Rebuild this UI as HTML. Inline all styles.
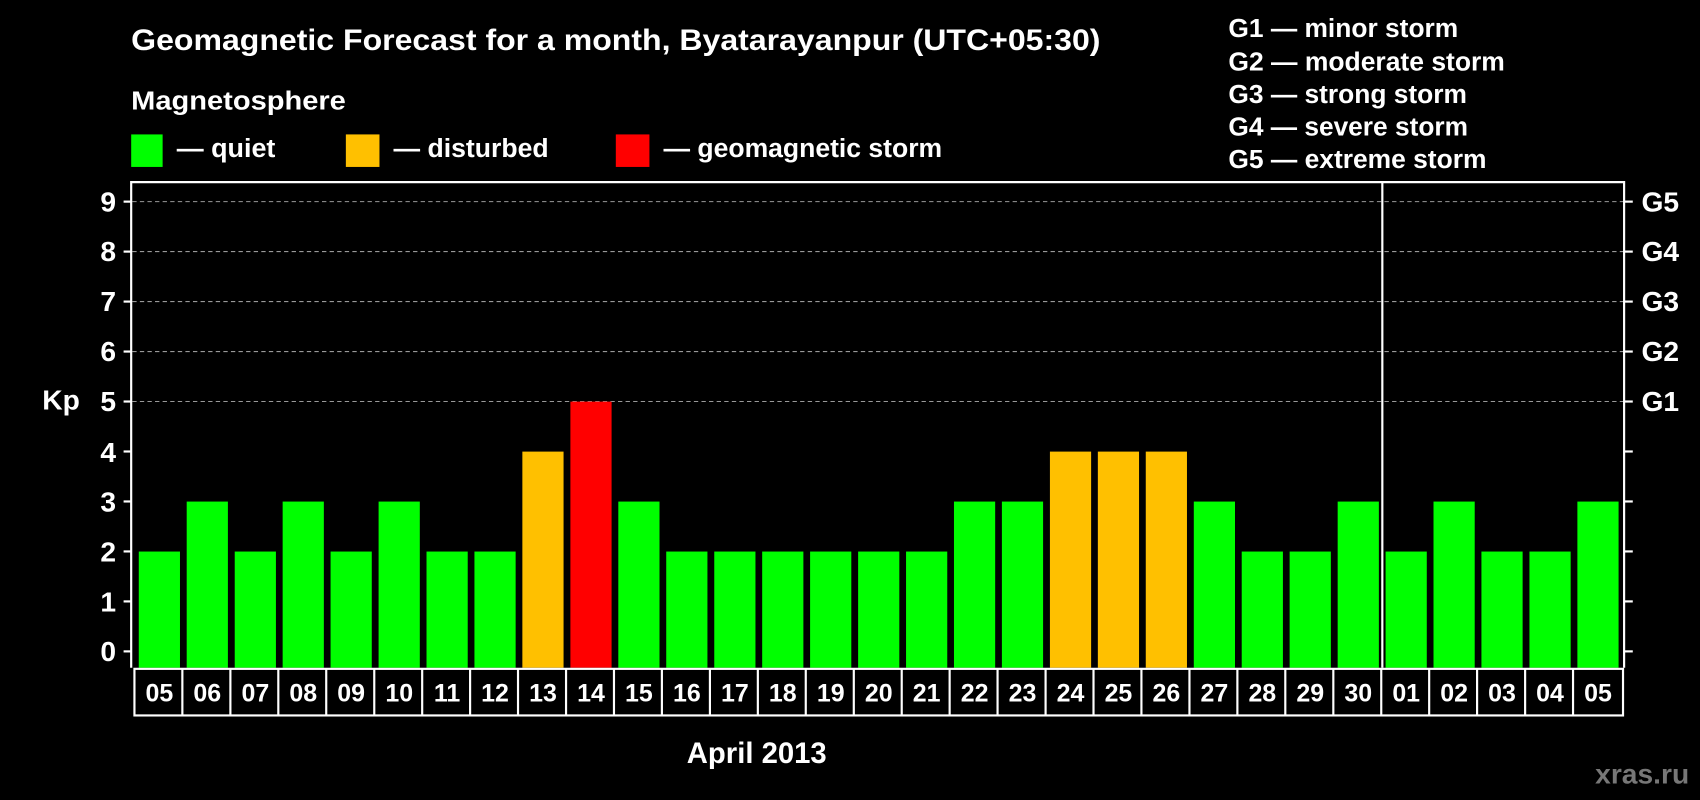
<!DOCTYPE html>
<html><head><meta charset="utf-8"><style>
html,body{margin:0;padding:0;background:#000;width:1700px;height:800px;overflow:hidden}
svg{display:block}
text{font-family:"Liberation Sans",Arial,sans-serif;font-weight:bold;fill:#fff}
</style></head><body>
<svg width="1700" height="800" viewBox="0 0 1568 738" preserveAspectRatio="none" xmlns="http://www.w3.org/2000/svg">
<rect width="1568" height="738" fill="#000"/>
<text x="121" y="46" font-size="27" textLength="894" lengthAdjust="spacingAndGlyphs">Geomagnetic Forecast for a month, Byatarayanpur (UTC+05:30)</text>
<text x="121" y="101" font-size="24" textLength="198" lengthAdjust="spacingAndGlyphs">Magnetosphere</text>
<rect x="121" y="124" width="29" height="30" fill="#00ff00"/>
<rect x="319" y="124" width="31" height="30" fill="#ffc000"/>
<rect x="568" y="124" width="31" height="30" fill="#ff0000"/>
<text x="163" y="145" font-size="24" textLength="91" lengthAdjust="spacingAndGlyphs">— quiet</text>
<text x="363" y="145" font-size="24" textLength="143" lengthAdjust="spacingAndGlyphs">— disturbed</text>
<text x="612" y="145" font-size="24" textLength="257" lengthAdjust="spacingAndGlyphs">— geomagnetic storm</text>
<g font-size="24">
<text x="1133" y="34" textLength="212" lengthAdjust="spacingAndGlyphs">G1 — minor storm</text>
<text x="1133" y="65" textLength="255" lengthAdjust="spacingAndGlyphs">G2 — moderate storm</text>
<text x="1133" y="95" textLength="220" lengthAdjust="spacingAndGlyphs">G3 — strong storm</text>
<text x="1133" y="125" textLength="221" lengthAdjust="spacingAndGlyphs">G4 — severe storm</text>
<text x="1133" y="155" textLength="238" lengthAdjust="spacingAndGlyphs">G5 — extreme storm</text>
</g>
<g stroke="#999" stroke-width="1" stroke-dasharray="4,3">
<line x1="122" y1="186" x2="1498" y2="186"/>
<line x1="122" y1="232.1" x2="1498" y2="232.1"/>
<line x1="122" y1="278.2" x2="1498" y2="278.2"/>
<line x1="122" y1="324.3" x2="1498" y2="324.3"/>
<line x1="122" y1="370.4" x2="1498" y2="370.4"/>
</g>
<g fill="#00ff00">
<rect x="128" y="508.8" width="38" height="107.2"/>
<rect x="172.2" y="462.7" width="38" height="153.3"/>
<rect x="216.5" y="508.8" width="38" height="107.2"/>
<rect x="260.7" y="462.7" width="38" height="153.3"/>
<rect x="304.9" y="508.8" width="38" height="107.2"/>
<rect x="349.2" y="462.7" width="38" height="153.3"/>
<rect x="393.4" y="508.8" width="38" height="107.2"/>
<rect x="437.6" y="508.8" width="38" height="107.2"/>
<rect x="570.3" y="462.7" width="38" height="153.3"/>
<rect x="614.5" y="508.8" width="38" height="107.2"/>
<rect x="658.8" y="508.8" width="38" height="107.2"/>
<rect x="703" y="508.8" width="38" height="107.2"/>
<rect x="747.2" y="508.8" width="38" height="107.2"/>
<rect x="791.5" y="508.8" width="38" height="107.2"/>
<rect x="835.7" y="508.8" width="38" height="107.2"/>
<rect x="879.9" y="462.7" width="38" height="153.3"/>
<rect x="924.1" y="462.7" width="38" height="153.3"/>
<rect x="1101.1" y="462.7" width="38" height="153.3"/>
<rect x="1145.3" y="508.8" width="38" height="107.2"/>
<rect x="1189.5" y="508.8" width="38" height="107.2"/>
<rect x="1233.8" y="462.7" width="38" height="153.3"/>
<rect x="1278" y="508.8" width="38" height="107.2"/>
<rect x="1322.2" y="462.7" width="38" height="153.3"/>
<rect x="1366.4" y="508.8" width="38" height="107.2"/>
<rect x="1410.7" y="508.8" width="38" height="107.2"/>
<rect x="1454.9" y="462.7" width="38" height="153.3"/>
</g>
<g fill="#ffc000">
<rect x="481.8" y="416.6" width="38" height="199.4"/>
<rect x="968.4" y="416.6" width="38" height="199.4"/>
<rect x="1012.6" y="416.6" width="38" height="199.4"/>
<rect x="1056.8" y="416.6" width="38" height="199.4"/>
</g>
<rect x="526.1" y="370.5" width="38" height="245.5" fill="#ff0000"/>
<g stroke="#fff" stroke-width="2" fill="none">
<polyline points="121,616 121,168 1498,168 1498,616"/>
<line x1="1275" y1="168" x2="1275" y2="616"/>
<rect x="124" y="617" width="1373" height="43" stroke-width="2"/>
</g>
<g stroke="#fff" stroke-width="2">
<line x1="114" y1="186" x2="121" y2="186"/><line x1="114" y1="232.1" x2="121" y2="232.1"/><line x1="114" y1="278.2" x2="121" y2="278.2"/><line x1="114" y1="324.3" x2="121" y2="324.3"/><line x1="114" y1="370.4" x2="121" y2="370.4"/><line x1="114" y1="416.5" x2="121" y2="416.5"/><line x1="114" y1="462.6" x2="121" y2="462.6"/><line x1="114" y1="508.7" x2="121" y2="508.7"/><line x1="114" y1="554.8" x2="121" y2="554.8"/><line x1="114" y1="600.9" x2="121" y2="600.9"/>
<line x1="1498" y1="186" x2="1506" y2="186"/><line x1="1498" y1="232.1" x2="1506" y2="232.1"/><line x1="1498" y1="278.2" x2="1506" y2="278.2"/><line x1="1498" y1="324.3" x2="1506" y2="324.3"/><line x1="1498" y1="370.4" x2="1506" y2="370.4"/><line x1="1498" y1="416.5" x2="1506" y2="416.5"/><line x1="1498" y1="462.6" x2="1506" y2="462.6"/><line x1="1498" y1="508.7" x2="1506" y2="508.7"/><line x1="1498" y1="554.8" x2="1506" y2="554.8"/><line x1="1498" y1="600.9" x2="1506" y2="600.9"/>
<line x1="168.2" y1="617" x2="168.2" y2="660"/><line x1="212.5" y1="617" x2="212.5" y2="660"/><line x1="256.7" y1="617" x2="256.7" y2="660"/><line x1="300.9" y1="617" x2="300.9" y2="660"/><line x1="345.2" y1="617" x2="345.2" y2="660"/><line x1="389.4" y1="617" x2="389.4" y2="660"/><line x1="433.6" y1="617" x2="433.6" y2="660"/><line x1="477.8" y1="617" x2="477.8" y2="660"/><line x1="522.1" y1="617" x2="522.1" y2="660"/><line x1="566.3" y1="617" x2="566.3" y2="660"/><line x1="610.5" y1="617" x2="610.5" y2="660"/><line x1="654.8" y1="617" x2="654.8" y2="660"/><line x1="699" y1="617" x2="699" y2="660"/><line x1="743.2" y1="617" x2="743.2" y2="660"/><line x1="787.5" y1="617" x2="787.5" y2="660"/><line x1="831.7" y1="617" x2="831.7" y2="660"/><line x1="875.9" y1="617" x2="875.9" y2="660"/><line x1="920.1" y1="617" x2="920.1" y2="660"/><line x1="964.4" y1="617" x2="964.4" y2="660"/><line x1="1008.6" y1="617" x2="1008.6" y2="660"/><line x1="1052.8" y1="617" x2="1052.8" y2="660"/><line x1="1097.1" y1="617" x2="1097.1" y2="660"/><line x1="1141.3" y1="617" x2="1141.3" y2="660"/><line x1="1185.5" y1="617" x2="1185.5" y2="660"/><line x1="1229.8" y1="617" x2="1229.8" y2="660"/><line x1="1274" y1="617" x2="1274" y2="660"/><line x1="1318.2" y1="617" x2="1318.2" y2="660"/><line x1="1362.4" y1="617" x2="1362.4" y2="660"/><line x1="1406.7" y1="617" x2="1406.7" y2="660"/><line x1="1450.9" y1="617" x2="1450.9" y2="660"/>
</g>
<g font-size="26" text-anchor="end">
<text x="107" y="195">9</text><text x="107" y="241">8</text><text x="107" y="287">7</text><text x="107" y="333">6</text><text x="107" y="379">5</text><text x="107" y="426">4</text><text x="107" y="472">3</text><text x="107" y="518">2</text><text x="107" y="564">1</text><text x="107" y="610">0</text>
</g>
<g font-size="26">
<text x="1514" y="195">G5</text><text x="1514" y="241">G4</text><text x="1514" y="287">G3</text><text x="1514" y="333">G2</text><text x="1514" y="379">G1</text>
</g>
<text x="39" y="378" font-size="26">Kp</text>
<g font-size="23" text-anchor="middle">
<text x="147" y="647">05</text><text x="191.2" y="647">06</text><text x="235.5" y="647">07</text><text x="279.7" y="647">08</text><text x="323.9" y="647">09</text><text x="368.2" y="647">10</text><text x="412.4" y="647">11</text><text x="456.6" y="647">12</text><text x="500.8" y="647">13</text><text x="545.1" y="647">14</text><text x="589.3" y="647">15</text><text x="633.5" y="647">16</text><text x="677.8" y="647">17</text><text x="722" y="647">18</text><text x="766.2" y="647">19</text><text x="810.5" y="647">20</text><text x="854.7" y="647">21</text><text x="898.9" y="647">22</text><text x="943.1" y="647">23</text><text x="987.4" y="647">24</text><text x="1031.6" y="647">25</text><text x="1075.8" y="647">26</text><text x="1120.1" y="647">27</text><text x="1164.3" y="647">28</text><text x="1208.5" y="647">29</text><text x="1252.8" y="647">30</text><text x="1297" y="647">01</text><text x="1341.2" y="647">02</text><text x="1385.4" y="647">03</text><text x="1429.7" y="647">04</text><text x="1473.9" y="647">05</text>
</g>
<text x="698" y="704" font-size="27" text-anchor="middle">April 2013</text>
<text x="1558" y="723" font-size="26" text-anchor="end" style="fill:#777">xras.ru</text>
</svg>
</body></html>
